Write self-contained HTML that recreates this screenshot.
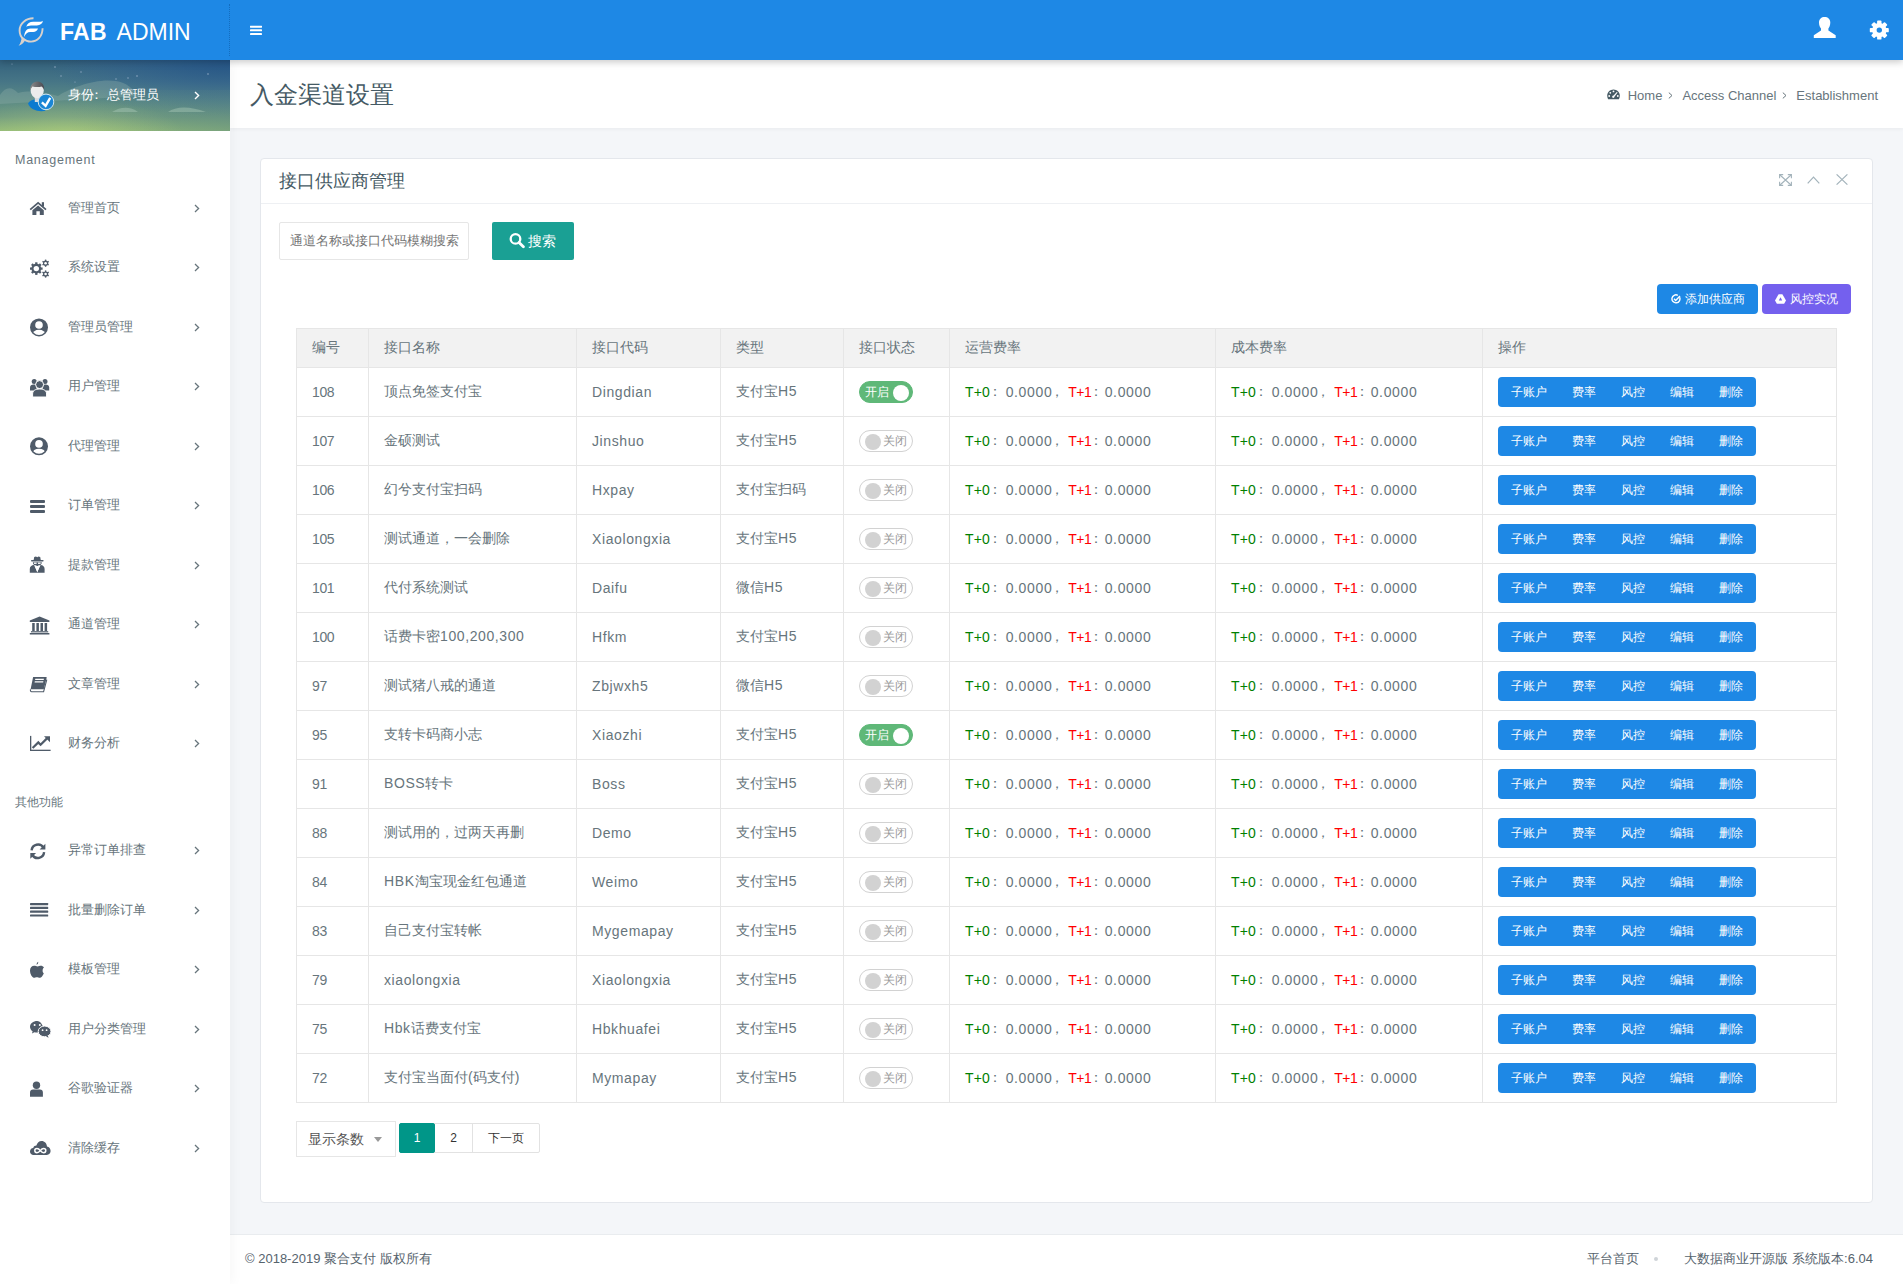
<!DOCTYPE html>
<html lang="zh"><head><meta charset="utf-8"><title>入金渠道设置</title>
<style>
*{box-sizing:border-box;margin:0;padding:0}
html,body{width:1903px;height:1284px;overflow:hidden}
body{font-family:"Liberation Sans",sans-serif;background:#f4f6f9;color:#67757c;position:relative;font-size:14px}
.topbar{position:absolute;left:0;top:0;width:1903px;height:60px;background:#1e88e5;box-shadow:0 2px 7px rgba(0,0,0,.22);z-index:10}
.logo{position:absolute;left:0;top:0;width:230px;height:60px}
.logoic{position:absolute;left:14px;top:14px}
.lt{position:absolute;left:60px;top:18px;font-size:23px;line-height:28px;color:#fff;letter-spacing:0.3px;white-space:nowrap}
.lt i{font-style:normal;margin-left:3px;letter-spacing:0}
.lt b{font-weight:bold}
.tdiv{position:absolute;left:229px;top:4px;width:1px;height:52px;border-left:1px dotted rgba(0,60,120,.35)}
.hamb{position:absolute;left:250px;top:24px}
.tuser{position:absolute;left:1813px;top:15px}
.tgear{position:absolute;left:1868px;top:18.5px}
.sidebar{position:absolute;left:0;top:60px;width:230px;height:1224px;background:#fff;z-index:6;box-shadow:2px 0 12px rgba(0,0,0,.04)}
.uprof{position:absolute;left:0;top:0;width:230px;height:71px;overflow:hidden}
.sky{position:absolute;left:0;top:0}
.avatar{position:absolute;left:26px;top:21px}
.utx{position:absolute;left:68px;top:26px;font-size:13px;line-height:18px;color:#fff}
.uch{position:absolute;left:194px;top:31px}
.ncap{position:absolute;left:15px;font-size:12.5px;line-height:20px;color:#67757c}
.ncap2{position:absolute;left:15px;font-size:12px;line-height:20px;color:#67757c}
.mi{position:absolute;left:0;width:230px;height:60px}
.mic{position:absolute;left:28px;top:0;width:22px;height:60px;display:flex;align-items:center;justify-content:center}
.mtx{position:absolute;left:68px;top:21px;font-size:13px;line-height:18px;color:#67757c}
.mch{position:absolute;left:194px;top:26px;line-height:0}
.ptitle{position:absolute;left:230px;top:60px;width:1673px;height:68px;background:#fff;box-shadow:0 1px 4px rgba(0,0,0,.05)}
.ptitle h3{position:absolute;left:20px;top:20px;font-size:24px;line-height:30px;font-weight:normal;color:#455a64}
.bc{position:absolute;right:25px;top:27px;height:18px;font-size:13px;line-height:18px;color:#67757c;white-space:nowrap}
.bc .gauge{vertical-align:-1px;margin-right:4px;position:relative;top:-1px}
.bsep{margin:0 9px 0 6px;display:inline-block;width:5px;position:relative;top:-1px}
.bsv{display:block}
.card{position:absolute;left:260px;top:158px;width:1613px;height:1045px;background:#fff;border:1px solid #e4e7ec;border-radius:4px}
.chead{position:absolute;left:0;top:0;width:100%;height:45px;border-bottom:1px solid #eef0f3}
.ctitle{position:absolute;left:18px;top:11px;font-size:18px;line-height:22px;color:#455a64}
.ca1{position:absolute;left:1518px;top:15px}
.ca2{position:absolute;left:1546px;top:16px}
.ca3{position:absolute;left:1575px;top:15px}
.sinput{position:absolute;left:18px;top:63px;width:190px;height:38px;border:1px solid #e6e6e6;border-radius:2px;font-size:13px;line-height:36px;padding-left:10px;color:#757575;white-space:nowrap;overflow:hidden}
.sbtn{position:absolute;left:231px;top:63px;width:82px;height:38px;background:#1aa094;border-radius:2px;color:#fff;font-size:14px;line-height:38px;text-align:center}
.sbtn .mag{position:absolute;left:16px;top:10px}
.stx{position:absolute;left:36px;top:0}
.abtn{position:absolute;top:125px;height:30px;border-radius:4px;color:#fff;font-size:12px;line-height:30px;text-align:center;white-space:nowrap}
.abtn svg{vertical-align:-1px;margin-right:4px}
.addb{left:1396px;width:101px;background:#1e88e5}
.riskb{left:1501px;width:89px;background:#7460ee}
.tbl{position:absolute;left:35px;top:169px;border-collapse:collapse;table-layout:fixed;width:1541px;font-size:14px;color:#666}
.tbl th,.tbl td{border:1px solid #e6e6e6;padding:0 15px;text-align:left;font-weight:normal;white-space:nowrap}
.tbl th{height:39px;background:#f2f2f2;font-size:14px}
.tbl td{height:49px;color:#67757c}
.g{color:#008000}.r{color:#f00}
.sw{display:inline-block;position:relative;height:22px;width:54px;border-radius:20px;border:1px solid #d2d2d2;vertical-align:middle;font-size:12px;line-height:20px}
.sw i{position:absolute;top:3px;width:16px;height:16px;border-radius:50%;background:#d2d2d2}
.sw em{font-style:normal;position:absolute;top:0}
.sw.on{background:#5fb878;border-color:#5fb878;color:#fff}
.sw.on i{left:33px;background:#fff}
.sw.on em{left:5px}
.sw.off{background:#fff;color:#999}
.sw.off i{left:5px}
.sw.off em{left:23px}
.bg{display:inline-flex;height:30px;background:#1e88e5;border-radius:4px;vertical-align:middle}
.bg b{font-weight:normal;color:#fff;font-size:12px;line-height:30px;text-align:center}
.w1{width:62px}.w2{width:48px}.w3{width:49px}.w4{width:49px}.w5{width:50px}
.pager{position:absolute;left:35px;top:962px;height:36px}
.psel{position:absolute;left:0;top:0;width:100px;height:36px;border:1px solid #e6e6e6;font-size:14px;line-height:34px;padding-left:11px;color:#555}
.tri{position:absolute;left:77px;top:15px;width:0;height:0;border-left:4px solid transparent;border-right:4px solid transparent;border-top:5px solid #999}
.pg{position:absolute;top:2px;height:30px;border:1px solid #e2e2e2;font-size:12px;line-height:28px;text-align:center;color:#333}
.pcur{left:103px;width:36px;background:#009688;border-color:#009688;color:#fff;border-radius:2px;z-index:2}
.p2{left:138px;width:39px}
.pnext{left:176px;width:68px;border-radius:0 2px 2px 0}
.footer{position:absolute;left:230px;top:1234px;width:1673px;height:50px;background:#fff;border-top:1px solid #e9ecef;font-size:13px;color:#67757c}
.fl{position:absolute;left:15px;top:16px;line-height:18px}
.fr{position:absolute;right:30px;top:16px;line-height:18px;white-space:nowrap}
.fdot{color:#ccc;margin:0 26px 0 15px;font-size:10px}
.sbico{position:absolute;left:0;top:0;z-index:7}
.l{letter-spacing:0.6px}
.tbl .c{display:inline-block;width:15.8px;overflow:hidden;vertical-align:top}
.tbl .c{text-indent:-4px}
.n{letter-spacing:0.65px}
.g,.r{letter-spacing:0.1px}
.tbl .r{letter-spacing:-0.5px}
.tbl .r + .c{width:13.5px}
.tbl .c{text-indent:-2px}

.tbl th{color:#67757c}
.tbl td:first-child .l{letter-spacing:-0.4px}
.fl,.fr{top:15px;color:#56636d}
.fdot{display:inline-block;width:4px;height:4px;border-radius:50%;background:#cfd4d8;color:transparent;overflow:hidden;vertical-align:middle;font-size:0;position:relative;top:-1px}
.ncap{letter-spacing:0.75px}
.uc{display:inline-block;width:13px;text-indent:-4px;overflow:hidden;vertical-align:top}
.tbl .g,.tbl .r,.tbl .n{position:relative;top:1px}

</style></head>
<body>
<div class="topbar">
  <div class="logo">
    <svg class="logoic" width="36" height="36" viewBox="14 14 36 36"><path d="M33.5 18.3 C26 18.2 19.6 23.4 19.6 30.4 C19.6 37.6 25.2 41.6 31 41.6 C37.6 41.6 42.4 36.4 42.6 28.2" fill="none" stroke="#d8d1cc" stroke-width="1.9"/><path d="M21.6 36.4 C23.2 37.4 24.8 38.6 25.2 39.6 C24.6 42.6 22 44.8 18.6 45.8 C20.4 43.4 21.6 40.6 21.6 36.4Z" fill="#d8d1cc"/><path d="M26.2 26.8 C27.4 23.2 29.6 21.8 33.2 21.8 H39.6 C41 21.8 42.2 21.5 43 20.8 C42.4 23.6 40.4 25.3 36.8 25.4 H31 C28.8 25.5 27.3 25.9 26.2 26.8Z" fill="#fff"/><path d="M24.2 37 C24.3 31.8 26.6 28.6 30.6 28.6 H38 C37.3 30.7 35.6 32.1 33.2 32.1 H30.2 C27.6 32.1 25.6 33.8 24.2 37Z" fill="#fff"/></svg>
    <span class="lt"><b>FAB</b> <i>ADMIN</i></span>
  </div>
  <div class="tdiv"></div>
  <svg class="hamb" width="12" height="12" viewBox="250 24 12 12"><rect x="250" y="25.7" width="12" height="2" rx="0.4" fill="#fff"/><rect x="250" y="29.3" width="12" height="2" rx="0.4" fill="#fff"/><rect x="250" y="33" width="12" height="2" rx="0.4" fill="#fff"/></svg>
  <svg class="tuser" width="24" height="24" viewBox="1813 15 24 24"><path d="M1824.6 16.9 C1827.8 16.9 1830.3 18.8 1830.3 22.6 C1830.3 25.6 1829.2 27.6 1828.4 28.6 V30.4 L1835.7 35.2 V37.9 H1813.8 V35.2 L1821 30.4 V28.6 C1820.1 27.6 1819 25.6 1819 22.6 C1819 18.8 1821.4 16.9 1824.6 16.9Z" fill="#fff"/></svg>
  <svg class="tgear" width="22" height="22" viewBox="1868 18.5 22 22"><g fill="#fff" transform="translate(1879.3 29.6)"><circle r="7.2"/><rect x="-2.2" y="-9.5" width="4.4" height="5" rx="0.9" transform="rotate(0)"/><rect x="-2.2" y="-9.5" width="4.4" height="5" rx="0.9" transform="rotate(45)"/><rect x="-2.2" y="-9.5" width="4.4" height="5" rx="0.9" transform="rotate(90)"/><rect x="-2.2" y="-9.5" width="4.4" height="5" rx="0.9" transform="rotate(135)"/><rect x="-2.2" y="-9.5" width="4.4" height="5" rx="0.9" transform="rotate(180)"/><rect x="-2.2" y="-9.5" width="4.4" height="5" rx="0.9" transform="rotate(225)"/><rect x="-2.2" y="-9.5" width="4.4" height="5" rx="0.9" transform="rotate(270)"/><rect x="-2.2" y="-9.5" width="4.4" height="5" rx="0.9" transform="rotate(315)"/></g><circle cx="1879.3" cy="29.6" r="2.7" fill="#1e88e5"/></svg>
</div>

<div class="sidebar">
  <div class="uprof">
    <svg class="sky" width="230" height="71" viewBox="0 0 230 71"><defs>
<linearGradient id="skyg" x1="0" y1="0" x2="0" y2="1"><stop offset="0" stop-color="#34627e"/><stop offset="0.3" stop-color="#467586"/><stop offset="0.55" stop-color="#5a8985"/><stop offset="0.8" stop-color="#6f9a80"/><stop offset="1" stop-color="#90b878"/></linearGradient>
<radialGradient id="skyr" cx="1" cy="0" r="0.8"><stop offset="0" stop-color="#1f4f86" stop-opacity="0.75"/><stop offset="1" stop-color="#2a5aa0" stop-opacity="0"/></radialGradient>
<radialGradient id="skyb" cx="0.3" cy="1.05" r="0.5"><stop offset="0" stop-color="#c4dc80" stop-opacity="0.4"/><stop offset="1" stop-color="#c4dc80" stop-opacity="0"/></radialGradient>
<linearGradient id="skyh" x1="0" y1="0" x2="1" y2="0"><stop offset="0.3" stop-color="#5e8a82" stop-opacity="0"/><stop offset="1" stop-color="#5e8a82" stop-opacity="0.45"/></linearGradient></defs>
<rect width="230" height="71" fill="url(#skyg)"/><rect y="30" width="230" height="41" fill="url(#skyh)"/><rect width="230" height="71" fill="url(#skyb)"/><rect width="230" height="71" fill="url(#skyr)"/>
<path d="M0 35 C6 26 12 27 18 33 C30 30 44 32 58 36 C70 28 96 18 116 21 C126 22 134 30 140 36 L0 44Z" fill="#8fb0a8" opacity="0.35"/>
<path d="M112 52 C120 47 130 46 138 52 Z M168 52 C176 46 190 46 206 52Z" fill="#a9c7b5" opacity="0.45"/>
<g fill="#b9c8e0" opacity="0.7"><circle cx="55" cy="7" r="0.8"/><circle cx="81" cy="12" r="0.7"/><circle cx="61" cy="16" r="0.7"/><circle cx="116" cy="19" r="0.7"/><circle cx="128" cy="18" r="0.7"/><circle cx="137" cy="16" r="0.8"/><circle cx="208" cy="14" r="0.8"/><circle cx="75" cy="22" r="0.6"/><circle cx="12" cy="4" r="0.6"/></g>
</svg>
    <svg class="avatar" width="32" height="32" viewBox="0 0 32 32"><defs><linearGradient id="hair" x1="0" y1="0" x2="1" y2="0"><stop offset="0" stop-color="#8a8a8a"/><stop offset="1" stop-color="#4a4a52"/></linearGradient></defs>
<path d="M2 22.5 C3.5 19.8 6.5 18.6 9.5 18.2 C11 20 13 21 15.5 21 L19.5 29.8 C12 31 4.5 29 2 22.5Z" fill="#0b7ad0"/>
<rect x="8.8" y="14" width="6.5" height="7" fill="#dcdcdc"/>
<ellipse cx="11.2" cy="9.6" rx="6.6" ry="7.6" fill="#ececec"/>
<path d="M4.2 9.5 C4 4.5 7 0.6 11.5 0.6 C16 0.6 18.6 4.2 18.2 9.2 C17.6 7.8 16.8 6.4 15.5 5.6 C13 6.4 9 6.2 6.4 5.4 C5.4 6.6 4.8 8 4.2 9.5Z" fill="url(#hair)"/>
<circle cx="20" cy="20.9" r="7.8" fill="#1a86d6" stroke="#cfe6f0" stroke-width="1"/>
<path d="M15.9 21.4 L19.6 24.9 L24.2 16.9" fill="none" stroke="#fff" stroke-width="2.4"/></svg>
    <span class="utx">身份<span class="uc">：</span>总管理员</span>
    <svg class="uch" width="6" height="9" viewBox="0 0 6 9"><path d="M1 1 L4.6 4.5 L1 8" fill="none" stroke="#fff" stroke-width="1.4"/></svg>
  </div>
  <div class="ncap" style="top:90px">Management</div>
<div class="mi" style="top:118px"><span class="mtx">管理首页</span><span class="mch"><svg width="6" height="9" viewBox="0 0 6 9"><path d="M1 1 L4.6 4.5 L1 8" fill="none" stroke="#67757c" stroke-width="1.3"/></svg></span></div>
<div class="mi" style="top:177px"><span class="mtx">系统设置</span><span class="mch"><svg width="6" height="9" viewBox="0 0 6 9"><path d="M1 1 L4.6 4.5 L1 8" fill="none" stroke="#67757c" stroke-width="1.3"/></svg></span></div>
<div class="mi" style="top:237px"><span class="mtx">管理员管理</span><span class="mch"><svg width="6" height="9" viewBox="0 0 6 9"><path d="M1 1 L4.6 4.5 L1 8" fill="none" stroke="#67757c" stroke-width="1.3"/></svg></span></div>
<div class="mi" style="top:296px"><span class="mtx">用户管理</span><span class="mch"><svg width="6" height="9" viewBox="0 0 6 9"><path d="M1 1 L4.6 4.5 L1 8" fill="none" stroke="#67757c" stroke-width="1.3"/></svg></span></div>
<div class="mi" style="top:356px"><span class="mtx">代理管理</span><span class="mch"><svg width="6" height="9" viewBox="0 0 6 9"><path d="M1 1 L4.6 4.5 L1 8" fill="none" stroke="#67757c" stroke-width="1.3"/></svg></span></div>
<div class="mi" style="top:415px"><span class="mtx">订单管理</span><span class="mch"><svg width="6" height="9" viewBox="0 0 6 9"><path d="M1 1 L4.6 4.5 L1 8" fill="none" stroke="#67757c" stroke-width="1.3"/></svg></span></div>
<div class="mi" style="top:475px"><span class="mtx">提款管理</span><span class="mch"><svg width="6" height="9" viewBox="0 0 6 9"><path d="M1 1 L4.6 4.5 L1 8" fill="none" stroke="#67757c" stroke-width="1.3"/></svg></span></div>
<div class="mi" style="top:534px"><span class="mtx">通道管理</span><span class="mch"><svg width="6" height="9" viewBox="0 0 6 9"><path d="M1 1 L4.6 4.5 L1 8" fill="none" stroke="#67757c" stroke-width="1.3"/></svg></span></div>
<div class="mi" style="top:594px"><span class="mtx">文章管理</span><span class="mch"><svg width="6" height="9" viewBox="0 0 6 9"><path d="M1 1 L4.6 4.5 L1 8" fill="none" stroke="#67757c" stroke-width="1.3"/></svg></span></div>
<div class="mi" style="top:653px"><span class="mtx">财务分析</span><span class="mch"><svg width="6" height="9" viewBox="0 0 6 9"><path d="M1 1 L4.6 4.5 L1 8" fill="none" stroke="#67757c" stroke-width="1.3"/></svg></span></div>

  <div class="ncap2" style="top:732px">其他功能</div>
<div class="mi" style="top:760px"><span class="mtx">异常订单排查</span><span class="mch"><svg width="6" height="9" viewBox="0 0 6 9"><path d="M1 1 L4.6 4.5 L1 8" fill="none" stroke="#67757c" stroke-width="1.3"/></svg></span></div>
<div class="mi" style="top:820px"><span class="mtx">批量删除订单</span><span class="mch"><svg width="6" height="9" viewBox="0 0 6 9"><path d="M1 1 L4.6 4.5 L1 8" fill="none" stroke="#67757c" stroke-width="1.3"/></svg></span></div>
<div class="mi" style="top:879px"><span class="mtx">模板管理</span><span class="mch"><svg width="6" height="9" viewBox="0 0 6 9"><path d="M1 1 L4.6 4.5 L1 8" fill="none" stroke="#67757c" stroke-width="1.3"/></svg></span></div>
<div class="mi" style="top:939px"><span class="mtx">用户分类管理</span><span class="mch"><svg width="6" height="9" viewBox="0 0 6 9"><path d="M1 1 L4.6 4.5 L1 8" fill="none" stroke="#67757c" stroke-width="1.3"/></svg></span></div>
<div class="mi" style="top:998px"><span class="mtx">谷歌验证器</span><span class="mch"><svg width="6" height="9" viewBox="0 0 6 9"><path d="M1 1 L4.6 4.5 L1 8" fill="none" stroke="#67757c" stroke-width="1.3"/></svg></span></div>
<div class="mi" style="top:1058px"><span class="mtx">清除缓存</span><span class="mch"><svg width="6" height="9" viewBox="0 0 6 9"><path d="M1 1 L4.6 4.5 L1 8" fill="none" stroke="#67757c" stroke-width="1.3"/></svg></span></div>

</div>
<svg class="sbico" width="230" height="1284" viewBox="0 0 230 1284"><defs><clipPath id="ucclip"><circle cx="39" cy="327.4" r="7.5"/></clipPath></defs>
<path d="M30.2 209.6 L38.1 202.8 L46 209.6" fill="none" stroke="#4f5b69" stroke-width="1.7"/><rect x="41.8" y="202.2" width="2.2" height="4.4" fill="#4f5b69"/><path d="M32.4 210.2 L38.1 205.4 L43.8 210.2 V215 H39.8 V211.3 H36.4 V215 H32.4Z" fill="#4f5b69"/>
<circle cx="36.3" cy="268.6" r="4.9" fill="#4f5b69"/><rect x="35.15" y="262.3" width="2.3" height="12.6" fill="#4f5b69" transform="rotate(0.0 36.3 268.6)"/><rect x="35.15" y="262.3" width="2.3" height="12.6" fill="#4f5b69" transform="rotate(45.0 36.3 268.6)"/><rect x="35.15" y="262.3" width="2.3" height="12.6" fill="#4f5b69" transform="rotate(90.0 36.3 268.6)"/><rect x="35.15" y="262.3" width="2.3" height="12.6" fill="#4f5b69" transform="rotate(135.0 36.3 268.6)"/><circle cx="36.3" cy="268.6" r="2.7" fill="#fff"/><circle cx="45.6" cy="263.2" r="2.6" fill="#4f5b69"/><rect x="44.9" y="259.59999999999997" width="1.4" height="7.2" fill="#4f5b69" transform="rotate(0.0 45.6 263.2)"/><rect x="44.9" y="259.59999999999997" width="1.4" height="7.2" fill="#4f5b69" transform="rotate(60.0 45.6 263.2)"/><rect x="44.9" y="259.59999999999997" width="1.4" height="7.2" fill="#4f5b69" transform="rotate(120.0 45.6 263.2)"/><circle cx="45.6" cy="263.2" r="1.3" fill="#fff"/><circle cx="45.6" cy="274.0" r="2.6" fill="#4f5b69"/><rect x="44.9" y="270.4" width="1.4" height="7.2" fill="#4f5b69" transform="rotate(0.0 45.6 274.0)"/><rect x="44.9" y="270.4" width="1.4" height="7.2" fill="#4f5b69" transform="rotate(60.0 45.6 274.0)"/><rect x="44.9" y="270.4" width="1.4" height="7.2" fill="#4f5b69" transform="rotate(120.0 45.6 274.0)"/><circle cx="45.6" cy="274.0" r="1.3" fill="#fff"/>
<g transform="translate(0 0.0)"><circle cx="39" cy="327.4" r="9" fill="#4f5b69"/>
<circle cx="39" cy="325" r="3.8" fill="#fff"/>
<ellipse cx="39" cy="334.4" rx="6.6" ry="4.6" fill="#fff" clip-path="url(#ucclip)"/></g><g transform="translate(0 118.90000000000003)"><circle cx="39" cy="327.4" r="9" fill="#4f5b69"/>
<circle cx="39" cy="325" r="3.8" fill="#fff"/>
<ellipse cx="39" cy="334.4" rx="6.6" ry="4.6" fill="#fff" clip-path="url(#ucclip)"/></g>
<circle cx="34.2" cy="381.4" r="2.5" fill="#4f5b69"/><circle cx="45" cy="381.4" r="2.5" fill="#4f5b69"/><path d="M30 390.4 V387.6 C30 385.5 31.5 384.4 33.6 384.4 C35 384.4 36 385 36.6 386 V390.4Z" fill="#4f5b69"/><path d="M49.2 390.4 V387.6 C49.2 385.5 47.7 384.4 45.6 384.4 C44.2 384.4 43.2 385 42.6 386 V390.4Z" fill="#4f5b69"/><circle cx="39.6" cy="384.6" r="4" fill="#4f5b69" stroke="#fff" stroke-width="1"/><path d="M32.6 397 V394 C32.6 390.8 35 389 39.6 389 C44.2 389 46.6 390.8 46.6 394 V397Z" fill="#4f5b69" stroke="#fff" stroke-width="1"/>
<rect x="30" y="500" width="15" height="3" rx="1" fill="#4f5b69"/><rect x="30" y="505" width="15" height="3" rx="1" fill="#4f5b69"/><rect x="30" y="510" width="15" height="3" rx="1" fill="#4f5b69"/>
<path d="M34.2 557 L36 556.6 L37.2 557.2 L38.4 556.6 L40.2 557 L40.8 560.2 H33.6Z" fill="#4f5b69"/><rect x="31" y="560" width="12.6" height="1.5" rx="0.7" fill="#4f5b69"/><path d="M32.8 562.2 H41.8 C41.8 564.6 40 566 37.3 566 C34.6 566 32.8 564.6 32.8 562.2Z" fill="#4f5b69"/><rect x="34" y="562.6" width="2.6" height="1.3" fill="#fff"/><rect x="38" y="562.6" width="2.6" height="1.3" fill="#fff"/><path d="M29.8 572.8 V569 C29.8 566.5 31.5 565.2 34 565 L37.3 572 L40.6 565 C43 565.2 44.6 566.5 44.6 569 V572.8Z" fill="#4f5b69"/><path d="M34.6 565.2 L37.3 572.4 L40 565.2 L38.3 565.4 L37.3 567.5 L36.3 565.4Z" fill="#fff"/>
<path d="M39.6 616.4 L49.4 620.4 V622 H29.8 V620.4Z" fill="#4f5b69"/><rect x="32.2" y="623" width="2.5" height="8" fill="#4f5b69"/><rect x="36.4" y="623" width="2.5" height="8" fill="#4f5b69"/><rect x="40.5" y="623" width="2.5" height="8" fill="#4f5b69"/><rect x="44.6" y="623" width="2.5" height="8" fill="#4f5b69"/><rect x="31" y="631.2" width="17.2" height="1.2" fill="#4f5b69"/><rect x="29.8" y="633" width="19.6" height="1.5" fill="#4f5b69"/>
<path d="M33.2 677 H46 C46.6 677 46.8 677.4 46.6 678 L44 688.4 C43.8 689 43.4 689.2 42.8 689.2 H30.6 L33 677.6Z" fill="#4f5b69"/><rect x="35.3" y="678.8" width="8.6" height="1.1" fill="#fff" transform="skewX(-12) translate(144.3 0)"/><rect x="34.8" y="681.3" width="8.6" height="1.1" fill="#fff" transform="skewX(-12) translate(144.8 0)"/><path d="M30.5 689.4 C30.2 690.6 30.6 691.7 31.6 691.7 H43.6 L46.8 679.6" fill="none" stroke="#4f5b69" stroke-width="1.1"/>
<rect x="30" y="735.9" width="1.3" height="15.1" fill="#4f5b69"/><rect x="30" y="749.7" width="20.6" height="1.3" fill="#4f5b69"/><path d="M32.6 748 L38.3 742.4 L40.6 744.8 L47 738.4" fill="none" stroke="#4f5b69" stroke-width="2.2"/><path d="M44 736.2 H50 V742.2Z" fill="#4f5b69"/>
<path d="M31.6 850.4 A6.4 6.4 0 0 1 43.4 847.6" fill="none" stroke="#4f5b69" stroke-width="2.4"/><path d="M45.4 843.8 V849.6 H39.6Z" fill="#4f5b69"/><path d="M44.1 852.2 A6.4 6.4 0 0 1 32.3 855" fill="none" stroke="#4f5b69" stroke-width="2.4"/><path d="M30.3 858.8 V853 H36.1Z" fill="#4f5b69"/>
<rect x="30" y="903" width="18.2" height="2.2" rx="0.6" fill="#4f5b69"/><rect x="30" y="906.8" width="18.2" height="2.2" rx="0.6" fill="#4f5b69"/><rect x="30" y="910.6" width="18.2" height="2.2" rx="0.6" fill="#4f5b69"/><rect x="30" y="914.4" width="18.2" height="2.2" rx="0.6" fill="#4f5b69"/>
<path d="M38.2 961.7 C38.4 963.2 37.6 964.3 36.6 964.8 C36.5 963.4 37.2 962.3 38.2 961.7Z" fill="#4f5b69"/><path d="M42.6 970.6 C42.6 968.6 43.8 967.7 44 967.5 C43.2 966.3 42 965.8 41 965.8 C39.6 965.8 38.8 966.5 37.6 966.5 C36.4 966.5 35.6 965.8 34.2 965.8 C32 965.8 30 967.6 30 970.6 C30 974.2 32.2 977.8 33.8 977.8 C35 977.8 35.6 977.2 36.9 977.2 C38.2 977.2 38.6 977.8 39.8 977.8 C41.4 977.8 42.8 975.6 43.8 973.4 C43 973 42.6 971.8 42.6 970.6Z" fill="#4f5b69"/>
<path d="M37.2 1020.9 C33.2 1020.9 30 1023.5 30 1026.8 C30 1028.6 31 1030.3 32.6 1031.3 L32 1033.4 L34.4 1032.2 C35.3 1032.5 36.2 1032.6 37.2 1032.6 C40.2 1032.6 42.8 1031 43.9 1028.6 C43 1025.5 40.6 1020.9 37.2 1020.9Z" fill="#4f5b69"/><ellipse cx="44.6" cy="1031.4" rx="6.4" ry="5.4" fill="#4f5b69" stroke="#fff" stroke-width="1"/><path d="M47.8 1035.6 L48.6 1037.8 L46 1036.4Z" fill="#4f5b69"/><circle cx="34.6" cy="1024.9" r="1" fill="#fff"/><circle cx="39.8" cy="1024.9" r="1" fill="#fff"/><circle cx="42.6" cy="1030.2" r="0.9" fill="#fff"/><circle cx="46.6" cy="1030.2" r="0.9" fill="#fff"/>
<circle cx="36.5" cy="1085.3" r="3.7" fill="#4f5b69"/><path d="M30 1096.8 V1092.6 C30 1090.8 31.2 1089.6 33 1089.6 H40 C41.8 1089.6 42.9 1090.8 42.9 1092.6 V1096.8Z" fill="#4f5b69"/>
<path d="M33 1154.9 C31.2 1154.9 30 1153.4 30 1151.6 C30 1149.6 31.4 1148.2 33.2 1148 C33.8 1146 35 1145.4 36.4 1145.4 C37.2 1142.8 39 1140.9 41.6 1140.9 C44.6 1140.9 46.6 1143.2 47 1146.4 C49.2 1146.8 50.6 1148.8 50.6 1151 C50.6 1153.2 49 1154.9 46.8 1154.9Z" fill="#4f5b69"/><path d="M40.3 1150.6 C39.2 1149.2 38.2 1148.5 37 1148.5 C35.8 1148.5 34.8 1149.4 34.8 1150.6 C34.8 1151.8 35.8 1152.7 37 1152.7 C38.2 1152.7 39.2 1152 40.3 1150.6 C41.4 1149.2 42.4 1148.5 43.6 1148.5 C44.8 1148.5 45.8 1149.4 45.8 1150.6 C45.8 1151.8 44.8 1152.7 43.6 1152.7 C42.4 1152.7 41.4 1152 40.3 1150.6Z" fill="none" stroke="#fff" stroke-width="1.5"/>
</svg>

<div class="ptitle">
  <h3>入金渠道设置</h3>
  <div class="bc">
    <svg class="gauge" width="13" height="11" viewBox="0 0 13 11"><path d="M6.5 0.5 C3 0.5 0.2 3.3 0.2 6.8 C0.2 8 0.5 9.2 1.1 10.2 H11.9 C12.5 9.2 12.8 8 12.8 6.8 C12.8 3.3 10 0.5 6.5 0.5Z" fill="#455a64"/><g fill="#fff"><circle cx="6.5" cy="2.4" r="0.9"/><circle cx="3.3" cy="3.8" r="0.9"/><circle cx="2.2" cy="7" r="0.9"/><circle cx="10.8" cy="7" r="0.9"/><path d="M9.8 3 L10.6 3.6 L7.6 7.6 C7.5 8.4 6.9 9 6.2 8.9 C5.5 8.8 5 8.1 5.2 7.4 C5.4 6.8 6 6.5 6.6 6.6Z"/></g></svg>
    <span class="b1">Home</span><span class="bsep"><svg class="bsv" width="5" height="7" viewBox="0 0 5 7"><path d="M0.8 0.6 L4 3.5 L0.8 6.4" fill="none" stroke="#67757c" stroke-width="1"/></svg></span><span class="b2">Access Channel</span><span class="bsep"><svg class="bsv" width="5" height="7" viewBox="0 0 5 7"><path d="M0.8 0.6 L4 3.5 L0.8 6.4" fill="none" stroke="#67757c" stroke-width="1"/></svg></span><span class="b3">Establishment</span>
  </div>
</div>

<div class="card">
  <div class="chead">
    <span class="ctitle">接口供应商管理</span>
    <svg class="ca1" width="13" height="12" viewBox="0 0 13 12"><g fill="none" stroke="#a3b3bb" stroke-width="1.1"><path d="M1 1 L12 11 M12 1 L1 11"/><path d="M0.6 4.2 V0.6 H4.2 M8.8 0.6 H12.4 V4.2 M0.6 7.8 V11.4 H4.2 M8.8 11.4 H12.4 V7.8"/></g></svg>
    <svg class="ca2" width="13" height="9" viewBox="0 0 13 9"><path d="M0.7 8.3 L6.5 2.2 L12.3 8.3" fill="none" stroke="#a3b3bb" stroke-width="1.2"/></svg>
    <svg class="ca3" width="12" height="11" viewBox="0 0 12 11"><path d="M0.6 0.4 L11.4 10.6 M11.4 0.4 L0.6 10.6" fill="none" stroke="#a3b3bb" stroke-width="1.2"/></svg>
  </div>
  <div class="sinput">通道名称或接口代码模糊搜索</div>
  <div class="sbtn"><svg class="mag" width="17" height="17" viewBox="508 232 17 17"><circle cx="515.5" cy="238.9" r="4.8" fill="none" stroke="#fff" stroke-width="2.3"/><path d="M519 242.4 L523.4 246.8" stroke="#fff" stroke-width="2.8" stroke-linecap="round"/></svg><span class="stx">搜索</span></div>
  <div class="abtn addb"><svg width="10" height="10" viewBox="0 0 10 10"><path d="M8.6 3.2 A4 4 0 1 1 6.8 1.3" fill="none" stroke="#fff" stroke-width="1.4"/><path d="M3 4.8 L4.7 6.5 L9 2" fill="none" stroke="#fff" stroke-width="1.4"/></svg><span>添加供应商</span></div>
  <div class="abtn riskb"><svg width="11" height="10" viewBox="0 0 11 10"><path d="M3.6 0.3 H7.4 L11 6.5 L9.1 9.7 H1.9 L0 6.5Z" fill="#fff"/><path d="M5.5 3.3 L7.2 6.4 H3.8Z" fill="#7460ee"/></svg><span>风控实况</span></div>
<table class="tbl"><colgroup><col style="width:72px"><col style="width:208px"><col style="width:144px"><col style="width:123px"><col style="width:106px"><col style="width:266px"><col style="width:267px"><col style="width:354px"></colgroup>
<thead><tr><th>编号</th><th>接口名称</th><th>接口代码</th><th>类型</th><th>接口状态</th><th>运营费率</th><th>成本费率</th><th>操作</th></tr></thead><tbody>
<tr><td><span class="l">108</span></td><td>顶点免签支付宝</td><td><span class="l">Dingdian</span></td><td>支付宝<span class="l">H5</span></td><td><span class="sw on"><em>开启</em><i></i></span></td><td><span class="g">T+0</span><span class="c">：</span><span class="n">0.0000</span><span class="c">，</span><span class="r">T+1</span><span class="c">：</span><span class="n">0.0000</span></td><td><span class="g">T+0</span><span class="c">：</span><span class="n">0.0000</span><span class="c">，</span><span class="r">T+1</span><span class="c">：</span><span class="n">0.0000</span></td><td><span class="bg"><b class="w1">子账户</b><b class="w2">费率</b><b class="w3">风控</b><b class="w4">编辑</b><b class="w5">删除</b></span></td></tr>
<tr><td><span class="l">107</span></td><td>金硕测试</td><td><span class="l">Jinshuo</span></td><td>支付宝<span class="l">H5</span></td><td><span class="sw off"><i></i><em>关闭</em></span></td><td><span class="g">T+0</span><span class="c">：</span><span class="n">0.0000</span><span class="c">，</span><span class="r">T+1</span><span class="c">：</span><span class="n">0.0000</span></td><td><span class="g">T+0</span><span class="c">：</span><span class="n">0.0000</span><span class="c">，</span><span class="r">T+1</span><span class="c">：</span><span class="n">0.0000</span></td><td><span class="bg"><b class="w1">子账户</b><b class="w2">费率</b><b class="w3">风控</b><b class="w4">编辑</b><b class="w5">删除</b></span></td></tr>
<tr><td><span class="l">106</span></td><td>幻兮支付宝扫码</td><td><span class="l">Hxpay</span></td><td>支付宝扫码</td><td><span class="sw off"><i></i><em>关闭</em></span></td><td><span class="g">T+0</span><span class="c">：</span><span class="n">0.0000</span><span class="c">，</span><span class="r">T+1</span><span class="c">：</span><span class="n">0.0000</span></td><td><span class="g">T+0</span><span class="c">：</span><span class="n">0.0000</span><span class="c">，</span><span class="r">T+1</span><span class="c">：</span><span class="n">0.0000</span></td><td><span class="bg"><b class="w1">子账户</b><b class="w2">费率</b><b class="w3">风控</b><b class="w4">编辑</b><b class="w5">删除</b></span></td></tr>
<tr><td><span class="l">105</span></td><td>测试通道，一会删除</td><td><span class="l">Xiaolongxia</span></td><td>支付宝<span class="l">H5</span></td><td><span class="sw off"><i></i><em>关闭</em></span></td><td><span class="g">T+0</span><span class="c">：</span><span class="n">0.0000</span><span class="c">，</span><span class="r">T+1</span><span class="c">：</span><span class="n">0.0000</span></td><td><span class="g">T+0</span><span class="c">：</span><span class="n">0.0000</span><span class="c">，</span><span class="r">T+1</span><span class="c">：</span><span class="n">0.0000</span></td><td><span class="bg"><b class="w1">子账户</b><b class="w2">费率</b><b class="w3">风控</b><b class="w4">编辑</b><b class="w5">删除</b></span></td></tr>
<tr><td><span class="l">101</span></td><td>代付系统测试</td><td><span class="l">Daifu</span></td><td>微信<span class="l">H5</span></td><td><span class="sw off"><i></i><em>关闭</em></span></td><td><span class="g">T+0</span><span class="c">：</span><span class="n">0.0000</span><span class="c">，</span><span class="r">T+1</span><span class="c">：</span><span class="n">0.0000</span></td><td><span class="g">T+0</span><span class="c">：</span><span class="n">0.0000</span><span class="c">，</span><span class="r">T+1</span><span class="c">：</span><span class="n">0.0000</span></td><td><span class="bg"><b class="w1">子账户</b><b class="w2">费率</b><b class="w3">风控</b><b class="w4">编辑</b><b class="w5">删除</b></span></td></tr>
<tr><td><span class="l">100</span></td><td>话费卡密<span class="l">100,200,300</span></td><td><span class="l">Hfkm</span></td><td>支付宝<span class="l">H5</span></td><td><span class="sw off"><i></i><em>关闭</em></span></td><td><span class="g">T+0</span><span class="c">：</span><span class="n">0.0000</span><span class="c">，</span><span class="r">T+1</span><span class="c">：</span><span class="n">0.0000</span></td><td><span class="g">T+0</span><span class="c">：</span><span class="n">0.0000</span><span class="c">，</span><span class="r">T+1</span><span class="c">：</span><span class="n">0.0000</span></td><td><span class="bg"><b class="w1">子账户</b><b class="w2">费率</b><b class="w3">风控</b><b class="w4">编辑</b><b class="w5">删除</b></span></td></tr>
<tr><td><span class="l">97</span></td><td>测试猪八戒的通道</td><td><span class="l">Zbjwxh5</span></td><td>微信<span class="l">H5</span></td><td><span class="sw off"><i></i><em>关闭</em></span></td><td><span class="g">T+0</span><span class="c">：</span><span class="n">0.0000</span><span class="c">，</span><span class="r">T+1</span><span class="c">：</span><span class="n">0.0000</span></td><td><span class="g">T+0</span><span class="c">：</span><span class="n">0.0000</span><span class="c">，</span><span class="r">T+1</span><span class="c">：</span><span class="n">0.0000</span></td><td><span class="bg"><b class="w1">子账户</b><b class="w2">费率</b><b class="w3">风控</b><b class="w4">编辑</b><b class="w5">删除</b></span></td></tr>
<tr><td><span class="l">95</span></td><td>支转卡码商小志</td><td><span class="l">Xiaozhi</span></td><td>支付宝<span class="l">H5</span></td><td><span class="sw on"><em>开启</em><i></i></span></td><td><span class="g">T+0</span><span class="c">：</span><span class="n">0.0000</span><span class="c">，</span><span class="r">T+1</span><span class="c">：</span><span class="n">0.0000</span></td><td><span class="g">T+0</span><span class="c">：</span><span class="n">0.0000</span><span class="c">，</span><span class="r">T+1</span><span class="c">：</span><span class="n">0.0000</span></td><td><span class="bg"><b class="w1">子账户</b><b class="w2">费率</b><b class="w3">风控</b><b class="w4">编辑</b><b class="w5">删除</b></span></td></tr>
<tr><td><span class="l">91</span></td><td><span class="l">BOSS</span>转卡</td><td><span class="l">Boss</span></td><td>支付宝<span class="l">H5</span></td><td><span class="sw off"><i></i><em>关闭</em></span></td><td><span class="g">T+0</span><span class="c">：</span><span class="n">0.0000</span><span class="c">，</span><span class="r">T+1</span><span class="c">：</span><span class="n">0.0000</span></td><td><span class="g">T+0</span><span class="c">：</span><span class="n">0.0000</span><span class="c">，</span><span class="r">T+1</span><span class="c">：</span><span class="n">0.0000</span></td><td><span class="bg"><b class="w1">子账户</b><b class="w2">费率</b><b class="w3">风控</b><b class="w4">编辑</b><b class="w5">删除</b></span></td></tr>
<tr><td><span class="l">88</span></td><td>测试用的，过两天再删</td><td><span class="l">Demo</span></td><td>支付宝<span class="l">H5</span></td><td><span class="sw off"><i></i><em>关闭</em></span></td><td><span class="g">T+0</span><span class="c">：</span><span class="n">0.0000</span><span class="c">，</span><span class="r">T+1</span><span class="c">：</span><span class="n">0.0000</span></td><td><span class="g">T+0</span><span class="c">：</span><span class="n">0.0000</span><span class="c">，</span><span class="r">T+1</span><span class="c">：</span><span class="n">0.0000</span></td><td><span class="bg"><b class="w1">子账户</b><b class="w2">费率</b><b class="w3">风控</b><b class="w4">编辑</b><b class="w5">删除</b></span></td></tr>
<tr><td><span class="l">84</span></td><td><span class="l">HBK</span>淘宝现金红包通道</td><td><span class="l">Weimo</span></td><td>支付宝<span class="l">H5</span></td><td><span class="sw off"><i></i><em>关闭</em></span></td><td><span class="g">T+0</span><span class="c">：</span><span class="n">0.0000</span><span class="c">，</span><span class="r">T+1</span><span class="c">：</span><span class="n">0.0000</span></td><td><span class="g">T+0</span><span class="c">：</span><span class="n">0.0000</span><span class="c">，</span><span class="r">T+1</span><span class="c">：</span><span class="n">0.0000</span></td><td><span class="bg"><b class="w1">子账户</b><b class="w2">费率</b><b class="w3">风控</b><b class="w4">编辑</b><b class="w5">删除</b></span></td></tr>
<tr><td><span class="l">83</span></td><td>自己支付宝转帐</td><td><span class="l">Mygemapay</span></td><td>支付宝<span class="l">H5</span></td><td><span class="sw off"><i></i><em>关闭</em></span></td><td><span class="g">T+0</span><span class="c">：</span><span class="n">0.0000</span><span class="c">，</span><span class="r">T+1</span><span class="c">：</span><span class="n">0.0000</span></td><td><span class="g">T+0</span><span class="c">：</span><span class="n">0.0000</span><span class="c">，</span><span class="r">T+1</span><span class="c">：</span><span class="n">0.0000</span></td><td><span class="bg"><b class="w1">子账户</b><b class="w2">费率</b><b class="w3">风控</b><b class="w4">编辑</b><b class="w5">删除</b></span></td></tr>
<tr><td><span class="l">79</span></td><td><span class="l">xiaolongxia</span></td><td><span class="l">Xiaolongxia</span></td><td>支付宝<span class="l">H5</span></td><td><span class="sw off"><i></i><em>关闭</em></span></td><td><span class="g">T+0</span><span class="c">：</span><span class="n">0.0000</span><span class="c">，</span><span class="r">T+1</span><span class="c">：</span><span class="n">0.0000</span></td><td><span class="g">T+0</span><span class="c">：</span><span class="n">0.0000</span><span class="c">，</span><span class="r">T+1</span><span class="c">：</span><span class="n">0.0000</span></td><td><span class="bg"><b class="w1">子账户</b><b class="w2">费率</b><b class="w3">风控</b><b class="w4">编辑</b><b class="w5">删除</b></span></td></tr>
<tr><td><span class="l">75</span></td><td><span class="l">Hbk</span>话费支付宝</td><td><span class="l">Hbkhuafei</span></td><td>支付宝<span class="l">H5</span></td><td><span class="sw off"><i></i><em>关闭</em></span></td><td><span class="g">T+0</span><span class="c">：</span><span class="n">0.0000</span><span class="c">，</span><span class="r">T+1</span><span class="c">：</span><span class="n">0.0000</span></td><td><span class="g">T+0</span><span class="c">：</span><span class="n">0.0000</span><span class="c">，</span><span class="r">T+1</span><span class="c">：</span><span class="n">0.0000</span></td><td><span class="bg"><b class="w1">子账户</b><b class="w2">费率</b><b class="w3">风控</b><b class="w4">编辑</b><b class="w5">删除</b></span></td></tr>
<tr><td><span class="l">72</span></td><td>支付宝当面付(码支付)</td><td><span class="l">Mymapay</span></td><td>支付宝<span class="l">H5</span></td><td><span class="sw off"><i></i><em>关闭</em></span></td><td><span class="g">T+0</span><span class="c">：</span><span class="n">0.0000</span><span class="c">，</span><span class="r">T+1</span><span class="c">：</span><span class="n">0.0000</span></td><td><span class="g">T+0</span><span class="c">：</span><span class="n">0.0000</span><span class="c">，</span><span class="r">T+1</span><span class="c">：</span><span class="n">0.0000</span></td><td><span class="bg"><b class="w1">子账户</b><b class="w2">费率</b><b class="w3">风控</b><b class="w4">编辑</b><b class="w5">删除</b></span></td></tr>
</tbody></table>
  <div class="pager">
    <div class="psel">显示条数<i class="tri"></i></div>
    <div class="pg pcur">1</div><div class="pg p2">2</div><div class="pg pnext">下一页</div>
  </div>
</div>

<div class="footer">
  <span class="fl">© 2018-2019 聚合支付 版权所有</span>
  <span class="fr"><span>平台首页</span><span class="fdot">•</span><span>大数据商业开源版 系统版本:6.04</span></span>
</div>
</body></html>
